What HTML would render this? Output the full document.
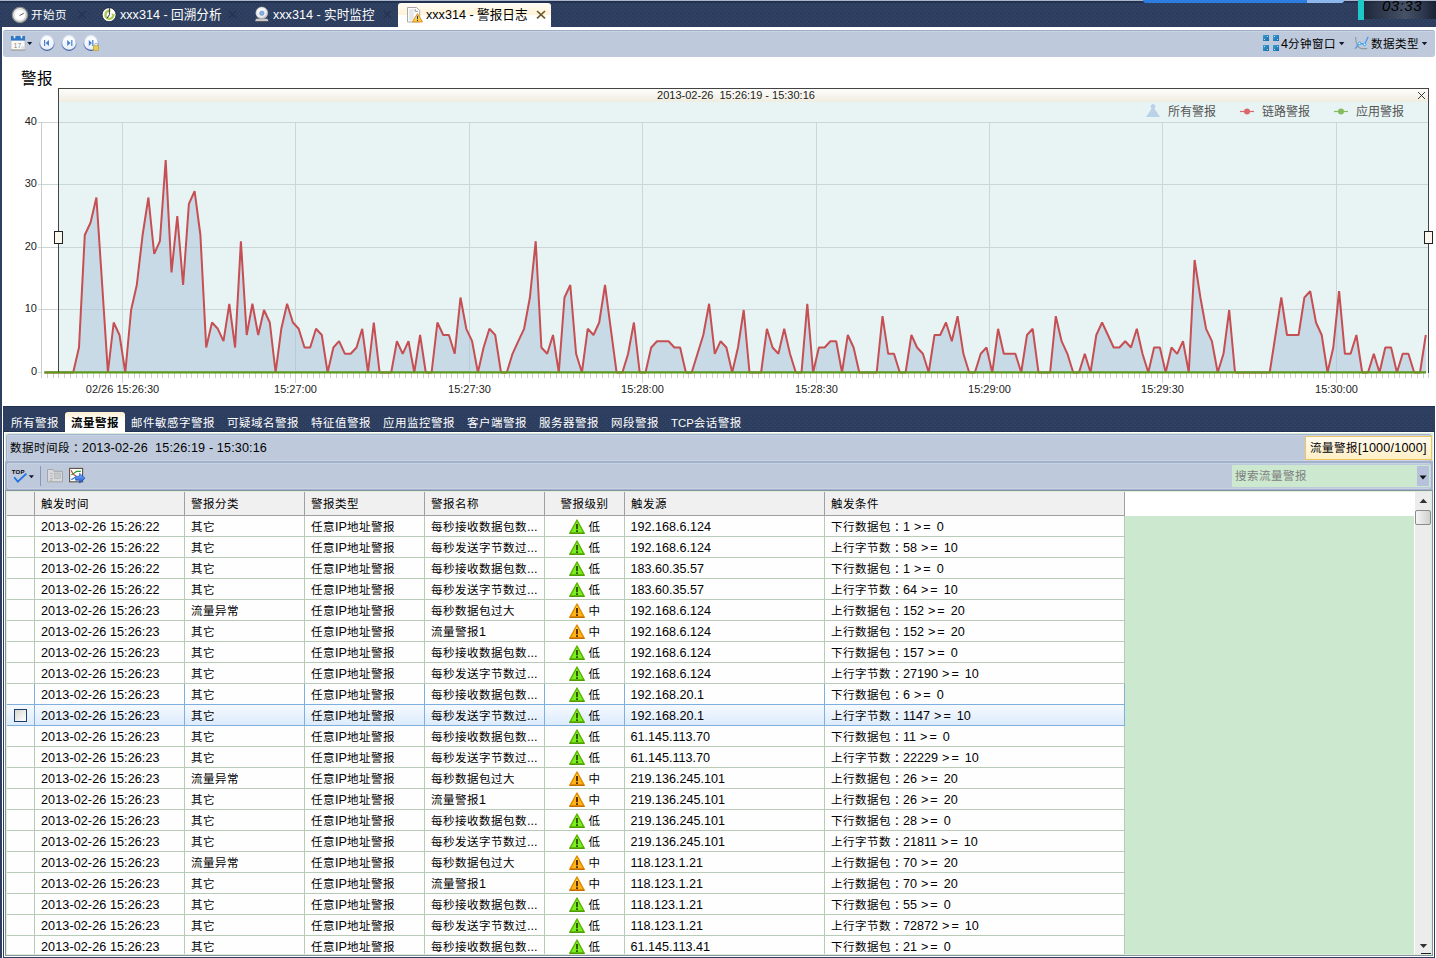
<!DOCTYPE html>
<html lang="zh-CN">
<head>
<meta charset="utf-8">
<title>xxx314 - 警报日志</title>
<style>
*{box-sizing:border-box;margin:0;padding:0}
html,body{width:1436px;height:958px;overflow:hidden;background:#fff}
body{position:relative;font-family:"Liberation Sans","Noto Sans CJK SC",sans-serif;font-size:11.5px;letter-spacing:.5px;color:#000;line-height:16px}
.a{font-size:12.6px;letter-spacing:0}
svg{letter-spacing:0}
.d{letter-spacing:.14px}
.fc{position:relative;left:3px}
.abs{position:absolute}
#top{position:absolute;left:0;top:0;width:1436px;height:27px;background:#2d3e5f}
#lb{position:absolute;left:0;top:27px;width:2px;height:931px;background:#2d3e5f}
.tab{position:absolute;top:7px;height:16px;color:#fff;white-space:nowrap;line-height:16px}
.tab svg{position:absolute;left:0;top:0}
.tab span.tx{position:absolute;left:19px;top:0}
.tx2{position:absolute;top:7px;color:#253552;font-size:12px}
#seltab{position:absolute;left:398px;top:3px;width:153px;height:25px;background:linear-gradient(#fffdf6 0,#fff2d6 12px,#fff 12px);border-radius:3px 3px 0 0}
#tb1{position:absolute;left:3px;top:30px;width:1432px;height:27px;background:#bec9db;border-top:1px solid #9dadc8;border-radius:3px;box-shadow:inset 0 1px 0 0 #c9d3e3}
#title{position:absolute;left:21px;top:68px;font-size:15.5px;line-height:22px}
/* lower panel */
#lp{position:absolute;left:3px;top:406px;width:1432px;height:552px;background:#fff;border-left:1px solid #2d3e5f;border-right:1px solid #2d3e5f;border-bottom:1px solid #2d3e5f}
#lpbar{position:absolute;left:3px;top:406px;width:1432px;height:26px;background:#2d3e5f}
#tabs2{position:absolute;left:5px;top:412px;height:20px;white-space:nowrap;font-size:0}
.t2{display:inline-block;height:20px;padding:0 6px;color:#fff;font-size:11.5px;line-height:22px;vertical-align:top}
.t2 .a{font-size:11.4px}
.t2.on{background:linear-gradient(#fdf0d2 0,#fff 9px);color:#000;font-weight:bold;border-radius:3px 3px 0 0}
#gl{position:absolute;left:5px;top:433px;width:1428px;height:1px;background:#d9efd9}
#info{position:absolute;left:6px;top:434px;width:1426px;height:28px;background:#bec9db;border:1px solid #a3b2cc;border-radius:3px;box-shadow:inset 0 0 0 1px #c8d2e3}
#info .txt{position:absolute;left:3px;top:5px;white-space:pre}
#badge{position:absolute;left:1305px;top:436px;width:127px;height:24px;background:linear-gradient(#fffaf0,#ffefc6);border:1px solid #efc55f;line-height:23px;padding-left:4px;white-space:nowrap}
#badge .a{letter-spacing:.2px}
#tb2{position:absolute;left:6px;top:462px;width:1426px;height:28px;background:#bec9db;border:1px solid #a3b2cc;border-radius:3px;box-shadow:inset 0 0 0 1px #c8d2e3}
#search{position:absolute;left:1232px;top:465px;width:198px;height:22px;background:#cce8cf;color:#7f7f7f;line-height:22px;padding-left:3px}
#sbtn{position:absolute;left:1417px;top:466px;width:12px;height:20px;background:#b6c1db}
#barbg{position:absolute;left:5px;top:434px;width:1428px;height:56px;background:linear-gradient(#d9efd9 0,#d9efd9 27px,#a3b2cc 27px)}
#frame{position:absolute;left:5px;top:490px;width:1428px;height:466px;border:1px solid #8a91a0;background:#d9efd9}
#tbl{position:absolute;left:7px;top:492px;width:1424px;height:462px;background:#fff;overflow:hidden}
#green{position:absolute;left:1118px;top:24px;width:289px;height:440px;background:#cce8cf}
#hdr{position:absolute;left:0;top:0;width:1118px;height:24px;background:#f0f0f0;border-bottom:1px solid #a0a0a0}
#hdr div{position:absolute;top:0;height:23px;border-right:1px solid #a0a0a0;line-height:24px;padding-left:6px;white-space:nowrap}
.r{position:absolute;left:0;width:1118px;height:21px;border-bottom:1px solid #b7cbb7;background:#fefefe}
.c{position:absolute;top:0;height:20px;border-right:1px solid #b7cbb7;line-height:22px;padding-left:6px;white-space:nowrap;overflow:hidden}
.c0{left:0;width:28px}.c1{left:28px;width:150px}.c2{left:178px;width:120px}.c3{left:298px;width:120px}.c4{left:418px;width:120px}.c5{left:538px;width:80px;padding-left:0;text-align:center}.c6{left:618px;width:200px}.c7{left:818px;width:300px}
.c5 .wi{vertical-align:top;margin:3px 4px 0 0}
.c1 .d{letter-spacing:.09px}.c6{padding-left:5.5px}.c7 .a{word-spacing:.5px}.ge{letter-spacing:2px}
.r.hot,.r.sel{border-bottom-color:#7fafdc}
.r.hot .c,.r.sel .c{border-right-color:#7fafdc}
.r.sel{background:linear-gradient(#f6faff,#dcebfc)}
.cb{position:absolute;left:7px;top:4px;width:13px;height:13px;border:1px solid #1c3f6e;background:linear-gradient(135deg,#d8d8d0,#fff)}
#sb{position:absolute;left:1408px;top:0;width:16px;height:463px;background:#ececec}
#sbt{position:absolute;left:0;top:18px;width:16px;height:15px;border:1px solid #8a8a8a;border-radius:2px;background:linear-gradient(90deg,#f4f4f4,#d0d0d0)}
</style>
</head>
<body>
<svg width="0" height="0" style="position:absolute">
<defs>
<pattern id="dots" width="4" height="4" patternUnits="userSpaceOnUse"><rect width="4" height="4" fill="#2c3d5e"/><rect x="3" y="1" width="1" height="1" fill="#354a6e"/><rect x="1" y="3" width="1" height="1" fill="#354a6e"/></pattern>
<pattern id="dots2" width="4" height="4" patternUnits="userSpaceOnUse"><rect width="4" height="4" fill="#2c3d5e"/><rect x="2" y="0" width="1" height="1" fill="#354a6e"/><rect x="0" y="2" width="1" height="1" fill="#354a6e"/></pattern>

<symbol id="wg" viewBox="0 0 16 16"><path d="M8,1 15.2,14.3H.8Z" fill="#7aee20" stroke="#5cb400" stroke-width="1.4" stroke-linejoin="round"/><path d="M.6,14.3h14.8" stroke="#4f9a00" stroke-width="1.3"/><path d="M7,5h2v5.2h-2zM7,11.3h2v1.6h-2z" fill="#2f5a00"/></symbol>
<symbol id="wo" viewBox="0 0 16 16"><path d="M8,1 15.2,14.3H.8Z" fill="#ffb51a" stroke="#e08a00" stroke-width="1.4" stroke-linejoin="round"/><path d="M6,6.5 8,3l2,3.5z" fill="#ffdc28"/><path d="M.6,14.3h14.8" stroke="#c26a00" stroke-width="1.3"/><path d="M7,5h2v5.2h-2zM7,11.3h2v1.6h-2z" fill="#5a2e00"/></symbol>
<radialGradient id="gsil" cx="0.4" cy="0.35" r="0.7"><stop offset="0" stop-color="#fff"/><stop offset="0.7" stop-color="#e9e9e9"/><stop offset="1" stop-color="#b9b9b9"/></radialGradient>
<linearGradient id="gbtn" x1="0" y1="0" x2="0" y2="1"><stop offset="0" stop-color="#fff"/><stop offset="1" stop-color="#e6edf9"/></linearGradient>
<linearGradient id="gbs" gradientUnits="userSpaceOnUse" x1="0" y1="35" x2="0" y2="51"><stop offset="0" stop-color="#e9eef8"/><stop offset=".45" stop-color="#a9bbdc"/><stop offset="1" stop-color="#34559c"/></linearGradient>
<linearGradient id="gsq" x1="0" y1="0" x2="1" y2="1"><stop offset="0" stop-color="#38a0d8"/><stop offset="1" stop-color="#1a6aa6"/></linearGradient>
<linearGradient id="gwarn" x1="0" y1="0" x2="0" y2="1"><stop offset="0" stop-color="#fff06a"/><stop offset="1" stop-color="#ffc832"/></linearGradient>
<linearGradient id="garr" x1="0" y1="0" x2="0" y2="1"><stop offset="0" stop-color="#7ab4ff"/><stop offset="1" stop-color="#1c55d0"/></linearGradient>
</defs>
</svg>

<div id="top"><svg width="1436" height="27" style="position:absolute;left:0;top:0"><rect width="1436" height="27" fill="url(#dots)"/><rect width="1436" height="3" fill="#22314f"/><rect width="1436" height="1" fill="#a9b4ca"/></svg></div>
<div id="lb"></div>
<div id="seltab"></div>
<div class="tab" style="left:12px"><span class="tx">开始页</span></div>
<div class="tab" style="left:101px"><span class="tx"><span class="a">xxx314 -</span><span class="a"> 回溯分析</span></span></div>
<div class="tab" style="left:254px"><span class="tx"><span class="a">xxx314 -</span><span class="a"> 实时监控</span></span></div>
<div class="tab" style="left:407px;color:#000"><span class="tx"><span class="a">xxx314 -</span><span class="a"> 警报日志</span></span></div>

<div class="abs" style="left:1143px;top:0;width:201px;height:3px;background:#2b7de0;border-radius:0 0 6px 6px;overflow:hidden"><div class="abs" style="left:164px;top:0;width:37px;height:3px;background:#8db7ec"></div></div>
<div class="abs" style="left:1358px;top:0;width:6px;height:20px;background:#1ec8c6"></div>
<div class="abs" style="left:1364px;top:1px;width:72px;height:18px;background:linear-gradient(90deg,rgba(22,27,38,.62),rgba(95,100,110,.5) 58%,rgba(40,46,60,.6) 85%,rgba(18,24,38,.75))"></div>
<div class="abs" style="left:1382px;top:-3px;font-size:15px;font-style:italic;color:#000;line-height:18px">03:33</div>

<div id="tb1"></div>
<div class="abs" style="left:1281px;top:36px;white-space:nowrap"><span class="a">4</span>分钟窗口</div>
<div class="abs" style="left:1371px;top:36px;white-space:nowrap">数据类型</div>

<div id="title">警报</div>
<svg id="chart" width="1436" height="406" viewBox="0 0 1436 406" style="position:absolute;left:0;top:0">
<defs><linearGradient id="hb" x1="0" y1="0" x2="0" y2="1"><stop offset="0" stop-color="#fdfdfb"/><stop offset="1" stop-color="#efece0"/></linearGradient></defs>
<rect x="58" y="88" width="1371" height="285" fill="#e8f4f4"/>
<rect x="59" y="89" width="1369" height="13" fill="url(#hb)"/>
<rect x="38" y="122" width="1390" height="1" fill="#cbd6d6"/>
<rect x="38" y="184" width="1390" height="1" fill="#cbd6d6"/>
<rect x="38" y="247" width="1390" height="1" fill="#cbd6d6"/>
<rect x="38" y="309" width="1390" height="1" fill="#cbd6d6"/>
<rect x="38" y="372" width="4" height="1" fill="#cbd6d6"/>
<rect x="41" y="122" width="1" height="256" fill="#cccccc"/>
<rect x="122" y="122" width="1" height="261" fill="#cbd6d6"/>
<rect x="295" y="122" width="1" height="261" fill="#cbd6d6"/>
<rect x="469" y="122" width="1" height="261" fill="#cbd6d6"/>
<rect x="642" y="122" width="1" height="261" fill="#cbd6d6"/>
<rect x="816" y="122" width="1" height="261" fill="#cbd6d6"/>
<rect x="989" y="122" width="1" height="261" fill="#cbd6d6"/>
<rect x="1162" y="122" width="1" height="261" fill="#cbd6d6"/>
<rect x="1336" y="122" width="1" height="261" fill="#cbd6d6"/>
<path d="M41.5,373v5M47.5,373v5M53.5,373v5M58.5,373v5M64.5,373v5M70.5,373v5M76.5,373v5M82.5,373v5M87.5,373v5M93.5,373v5M99.5,373v5M105.5,373v5M110.5,373v5M116.5,373v5M122.5,373v5M128.5,373v5M134.5,373v5M139.5,373v5M145.5,373v5M151.5,373v5M157.5,373v5M162.5,373v5M168.5,373v5M174.5,373v5M180.5,373v5M186.5,373v5M191.5,373v5M197.5,373v5M203.5,373v5M209.5,373v5M215.5,373v5M220.5,373v5M226.5,373v5M232.5,373v5M238.5,373v5M243.5,373v5M249.5,373v5M255.5,373v5M261.5,373v5M267.5,373v5M272.5,373v5M278.5,373v5M284.5,373v5M290.5,373v5M295.5,373v5M301.5,373v5M307.5,373v5M313.5,373v5M319.5,373v5M324.5,373v5M330.5,373v5M336.5,373v5M342.5,373v5M347.5,373v5M353.5,373v5M359.5,373v5M365.5,373v5M371.5,373v5M376.5,373v5M382.5,373v5M388.5,373v5M394.5,373v5M399.5,373v5M405.5,373v5M411.5,373v5M417.5,373v5M423.5,373v5M428.5,373v5M434.5,373v5M440.5,373v5M446.5,373v5M451.5,373v5M457.5,373v5M463.5,373v5M469.5,373v5M475.5,373v5M480.5,373v5M486.5,373v5M492.5,373v5M498.5,373v5M504.5,373v5M509.5,373v5M515.5,373v5M521.5,373v5M527.5,373v5M532.5,373v5M538.5,373v5M544.5,373v5M550.5,373v5M556.5,373v5M561.5,373v5M567.5,373v5M573.5,373v5M579.5,373v5M584.5,373v5M590.5,373v5M596.5,373v5M602.5,373v5M608.5,373v5M613.5,373v5M619.5,373v5M625.5,373v5M631.5,373v5M636.5,373v5M642.5,373v5M648.5,373v5M654.5,373v5M660.5,373v5M665.5,373v5M671.5,373v5M677.5,373v5M683.5,373v5M688.5,373v5M694.5,373v5M700.5,373v5M706.5,373v5M712.5,373v5M717.5,373v5M723.5,373v5M729.5,373v5M735.5,373v5M740.5,373v5M746.5,373v5M752.5,373v5M758.5,373v5M764.5,373v5M769.5,373v5M775.5,373v5M781.5,373v5M787.5,373v5M793.5,373v5M798.5,373v5M804.5,373v5M810.5,373v5M816.5,373v5M821.5,373v5M827.5,373v5M833.5,373v5M839.5,373v5M845.5,373v5M850.5,373v5M856.5,373v5M862.5,373v5M868.5,373v5M873.5,373v5M879.5,373v5M885.5,373v5M891.5,373v5M897.5,373v5M902.5,373v5M908.5,373v5M914.5,373v5M920.5,373v5M925.5,373v5M931.5,373v5M937.5,373v5M943.5,373v5M949.5,373v5M954.5,373v5M960.5,373v5M966.5,373v5M972.5,373v5M977.5,373v5M983.5,373v5M989.5,373v5M995.5,373v5M1001.5,373v5M1006.5,373v5M1012.5,373v5M1018.5,373v5M1024.5,373v5M1029.5,373v5M1035.5,373v5M1041.5,373v5M1047.5,373v5M1053.5,373v5M1058.5,373v5M1064.5,373v5M1070.5,373v5M1076.5,373v5M1082.5,373v5M1087.5,373v5M1093.5,373v5M1099.5,373v5M1105.5,373v5M1110.5,373v5M1116.5,373v5M1122.5,373v5M1128.5,373v5M1134.5,373v5M1139.5,373v5M1145.5,373v5M1151.5,373v5M1157.5,373v5M1162.5,373v5M1168.5,373v5M1174.5,373v5M1180.5,373v5M1186.5,373v5M1191.5,373v5M1197.5,373v5M1203.5,373v5M1209.5,373v5M1214.5,373v5M1220.5,373v5M1226.5,373v5M1232.5,373v5M1238.5,373v5M1243.5,373v5M1249.5,373v5M1255.5,373v5M1261.5,373v5M1266.5,373v5M1272.5,373v5M1278.5,373v5M1284.5,373v5M1290.5,373v5M1295.5,373v5M1301.5,373v5M1307.5,373v5M1313.5,373v5M1318.5,373v5M1324.5,373v5M1330.5,373v5M1336.5,373v5M1342.5,373v5M1347.5,373v5M1353.5,373v5M1359.5,373v5M1365.5,373v5M1371.5,373v5M1376.5,373v5M1382.5,373v5M1388.5,373v5M1394.5,373v5M1399.5,373v5M1405.5,373v5M1411.5,373v5M1417.5,373v5M1423.5,373v5M1428.5,373v5" stroke="#cfcfcf" stroke-width="1" fill="none"/>
<path d="M44.3,372.5 L44.3,372.5 L50.1,372.5 L55.9,372.5 L61.7,372.5 L67.5,372.5 L73.2,372.5 L79.0,347.5 L84.8,235.0 L90.6,222.5 L96.4,197.5 L102.2,285.0 L107.9,372.5 L113.7,322.5 L119.5,335.0 L125.3,372.5 L131.1,310.0 L136.8,285.0 L142.6,235.0 L148.4,197.5 L154.2,253.8 L159.9,241.2 L165.7,160.0 L171.5,272.5 L177.3,216.2 L183.1,285.0 L188.9,203.8 L194.6,191.2 L200.4,235.0 L206.2,347.5 L212.0,322.5 L217.8,328.8 L223.5,341.2 L229.3,303.8 L235.1,347.5 L240.9,241.2 L246.7,335.0 L252.4,303.8 L258.2,335.0 L264.0,310.0 L269.8,322.5 L275.6,372.5 L281.3,328.8 L287.1,303.8 L292.9,322.5 L298.7,328.8 L304.5,347.5 L310.2,347.5 L316.0,328.8 L321.8,335.0 L327.6,372.5 L333.4,347.5 L339.1,341.2 L344.9,353.8 L350.7,353.8 L356.5,347.5 L362.2,328.8 L368.0,372.5 L373.8,322.5 L379.6,372.5 L385.4,372.5 L391.2,372.5 L396.9,341.2 L402.7,353.8 L408.5,341.2 L414.3,372.5 L420.1,335.0 L425.8,372.5 L431.6,372.5 L437.4,322.5 L443.2,335.0 L448.9,335.0 L454.7,353.8 L460.5,297.5 L466.3,328.8 L472.1,341.2 L477.9,372.5 L483.6,347.5 L489.4,328.8 L495.2,335.0 L501.0,372.5 L506.8,372.5 L512.5,353.8 L518.3,341.2 L524.1,328.8 L529.9,297.5 L535.7,241.2 L541.4,347.5 L547.2,353.8 L553.0,335.0 L558.8,372.5 L564.5,297.5 L570.3,285.0 L576.1,353.8 L581.9,372.5 L587.7,328.8 L593.5,335.0 L599.2,322.5 L605.0,285.0 L610.8,328.8 L616.6,372.5 L622.4,372.5 L628.1,353.8 L633.9,322.5 L639.7,372.5 L645.5,372.5 L651.2,347.5 L657.0,341.2 L662.8,341.2 L668.6,341.2 L674.4,347.5 L680.1,347.5 L685.9,372.5 L691.7,372.5 L697.5,353.8 L703.3,335.0 L709.1,303.8 L714.8,353.8 L720.6,341.2 L726.4,347.5 L732.2,372.5 L738.0,347.5 L743.7,310.0 L749.5,372.5 L755.3,372.5 L761.1,372.5 L766.9,328.8 L772.6,347.5 L778.4,353.8 L784.2,328.8 L790.0,353.8 L795.8,372.5 L801.5,372.5 L807.3,303.8 L813.1,372.5 L818.9,347.5 L824.6,347.5 L830.4,341.2 L836.2,341.2 L842.0,372.5 L847.8,335.0 L853.6,347.5 L859.3,372.5 L865.1,372.5 L870.9,372.5 L876.7,372.5 L882.5,316.2 L888.2,353.8 L894.0,353.8 L899.8,372.5 L905.6,372.5 L911.4,335.0 L917.1,347.5 L922.9,353.8 L928.7,372.5 L934.5,335.0 L940.2,335.0 L946.0,322.5 L951.8,341.2 L957.6,316.2 L963.4,353.8 L969.2,372.5 L974.9,372.5 L980.7,353.8 L986.5,347.5 L992.3,372.5 L998.1,328.8 L1003.8,353.8 L1009.6,353.8 L1015.4,353.8 L1021.2,372.5 L1027.0,335.0 L1032.7,328.8 L1038.5,372.5 L1044.3,372.5 L1050.1,372.5 L1055.8,316.2 L1061.6,341.2 L1067.4,353.8 L1073.2,372.5 L1079.0,372.5 L1084.8,353.8 L1090.5,372.5 L1096.3,335.0 L1102.1,322.5 L1107.9,335.0 L1113.7,347.5 L1119.4,347.5 L1125.2,341.2 L1131.0,347.5 L1136.8,328.8 L1142.5,353.8 L1148.3,372.5 L1154.1,347.5 L1159.9,347.5 L1165.7,372.5 L1171.5,347.5 L1177.2,353.8 L1183.0,341.2 L1188.8,372.5 L1194.6,260.0 L1200.4,297.5 L1206.1,328.8 L1211.9,341.2 L1217.7,372.5 L1223.5,353.8 L1229.2,310.0 L1235.0,372.5 L1240.8,372.5 L1246.6,372.5 L1252.4,372.5 L1258.2,372.5 L1263.9,372.5 L1269.7,372.5 L1275.5,335.0 L1281.3,297.5 L1287.0,335.0 L1292.8,335.0 L1298.6,335.0 L1304.4,297.5 L1310.2,291.2 L1316.0,322.5 L1321.7,335.0 L1327.5,372.5 L1333.3,347.5 L1339.1,291.2 L1344.9,353.8 L1350.6,353.8 L1356.4,335.0 L1362.2,372.5 L1368.0,372.5 L1373.8,353.8 L1379.5,372.5 L1385.3,347.5 L1391.1,347.5 L1396.9,372.5 L1402.7,353.8 L1408.4,353.8 L1414.2,372.5 L1420.0,372.5 L1425.8,335.0 L1425.8,372.5 Z" fill="#a9c0da" fill-opacity="0.5"/>
<polyline points="44.3,372.5 50.1,372.5 55.9,372.5 61.7,372.5 67.5,372.5 73.2,372.5 79.0,347.5 84.8,235.0 90.6,222.5 96.4,197.5 102.2,285.0 107.9,372.5 113.7,322.5 119.5,335.0 125.3,372.5 131.1,310.0 136.8,285.0 142.6,235.0 148.4,197.5 154.2,253.8 159.9,241.2 165.7,160.0 171.5,272.5 177.3,216.2 183.1,285.0 188.9,203.8 194.6,191.2 200.4,235.0 206.2,347.5 212.0,322.5 217.8,328.8 223.5,341.2 229.3,303.8 235.1,347.5 240.9,241.2 246.7,335.0 252.4,303.8 258.2,335.0 264.0,310.0 269.8,322.5 275.6,372.5 281.3,328.8 287.1,303.8 292.9,322.5 298.7,328.8 304.5,347.5 310.2,347.5 316.0,328.8 321.8,335.0 327.6,372.5 333.4,347.5 339.1,341.2 344.9,353.8 350.7,353.8 356.5,347.5 362.2,328.8 368.0,372.5 373.8,322.5 379.6,372.5 385.4,372.5 391.2,372.5 396.9,341.2 402.7,353.8 408.5,341.2 414.3,372.5 420.1,335.0 425.8,372.5 431.6,372.5 437.4,322.5 443.2,335.0 448.9,335.0 454.7,353.8 460.5,297.5 466.3,328.8 472.1,341.2 477.9,372.5 483.6,347.5 489.4,328.8 495.2,335.0 501.0,372.5 506.8,372.5 512.5,353.8 518.3,341.2 524.1,328.8 529.9,297.5 535.7,241.2 541.4,347.5 547.2,353.8 553.0,335.0 558.8,372.5 564.5,297.5 570.3,285.0 576.1,353.8 581.9,372.5 587.7,328.8 593.5,335.0 599.2,322.5 605.0,285.0 610.8,328.8 616.6,372.5 622.4,372.5 628.1,353.8 633.9,322.5 639.7,372.5 645.5,372.5 651.2,347.5 657.0,341.2 662.8,341.2 668.6,341.2 674.4,347.5 680.1,347.5 685.9,372.5 691.7,372.5 697.5,353.8 703.3,335.0 709.1,303.8 714.8,353.8 720.6,341.2 726.4,347.5 732.2,372.5 738.0,347.5 743.7,310.0 749.5,372.5 755.3,372.5 761.1,372.5 766.9,328.8 772.6,347.5 778.4,353.8 784.2,328.8 790.0,353.8 795.8,372.5 801.5,372.5 807.3,303.8 813.1,372.5 818.9,347.5 824.6,347.5 830.4,341.2 836.2,341.2 842.0,372.5 847.8,335.0 853.6,347.5 859.3,372.5 865.1,372.5 870.9,372.5 876.7,372.5 882.5,316.2 888.2,353.8 894.0,353.8 899.8,372.5 905.6,372.5 911.4,335.0 917.1,347.5 922.9,353.8 928.7,372.5 934.5,335.0 940.2,335.0 946.0,322.5 951.8,341.2 957.6,316.2 963.4,353.8 969.2,372.5 974.9,372.5 980.7,353.8 986.5,347.5 992.3,372.5 998.1,328.8 1003.8,353.8 1009.6,353.8 1015.4,353.8 1021.2,372.5 1027.0,335.0 1032.7,328.8 1038.5,372.5 1044.3,372.5 1050.1,372.5 1055.8,316.2 1061.6,341.2 1067.4,353.8 1073.2,372.5 1079.0,372.5 1084.8,353.8 1090.5,372.5 1096.3,335.0 1102.1,322.5 1107.9,335.0 1113.7,347.5 1119.4,347.5 1125.2,341.2 1131.0,347.5 1136.8,328.8 1142.5,353.8 1148.3,372.5 1154.1,347.5 1159.9,347.5 1165.7,372.5 1171.5,347.5 1177.2,353.8 1183.0,341.2 1188.8,372.5 1194.6,260.0 1200.4,297.5 1206.1,328.8 1211.9,341.2 1217.7,372.5 1223.5,353.8 1229.2,310.0 1235.0,372.5 1240.8,372.5 1246.6,372.5 1252.4,372.5 1258.2,372.5 1263.9,372.5 1269.7,372.5 1275.5,335.0 1281.3,297.5 1287.0,335.0 1292.8,335.0 1298.6,335.0 1304.4,297.5 1310.2,291.2 1316.0,322.5 1321.7,335.0 1327.5,372.5 1333.3,347.5 1339.1,291.2 1344.9,353.8 1350.6,353.8 1356.4,335.0 1362.2,372.5 1368.0,372.5 1373.8,353.8 1379.5,372.5 1385.3,347.5 1391.1,347.5 1396.9,372.5 1402.7,353.8 1408.4,353.8 1414.2,372.5 1420.0,372.5 1425.8,335.0" fill="none" stroke="#c54f52" stroke-width="2" stroke-linejoin="bevel"/>
<path d="M44.5,372.4H1426" stroke="#5b9a1f" stroke-width="2.2" fill="none"/>
<rect x="58" y="88" width="1371" height="1" fill="#444"/>
<rect x="58" y="88" width="1" height="284" fill="#444"/>
<rect x="1428" y="88" width="1" height="285" fill="#444"/>
<rect x="54.5" y="231.5" width="8" height="12" fill="#faf8ee" stroke="#222" stroke-width="1"/>
<rect x="1424.5" y="231.5" width="8" height="12" fill="#faf8ee" stroke="#222" stroke-width="1"/>
<path d="M1418,92l7,7M1425,92l-7,7" stroke="#222" stroke-width="0.9" fill="none"/>
<g font-family="'Liberation Sans',sans-serif" font-size="11" fill="#222">
<text x="37" y="125" text-anchor="end">40</text>
<text x="37" y="187" text-anchor="end">30</text>
<text x="37" y="250" text-anchor="end">20</text>
<text x="37" y="312" text-anchor="end">10</text>
<text x="37" y="375" text-anchor="end">0</text>
<text x="122.5" y="393" text-anchor="middle">02/26 15:26:30</text>
<text x="295.5" y="393" text-anchor="middle">15:27:00</text>
<text x="469.5" y="393" text-anchor="middle">15:27:30</text>
<text x="642.5" y="393" text-anchor="middle">15:28:00</text>
<text x="816.5" y="393" text-anchor="middle">15:28:30</text>
<text x="989.5" y="393" text-anchor="middle">15:29:00</text>
<text x="1162.5" y="393" text-anchor="middle">15:29:30</text>
<text x="1336.5" y="393" text-anchor="middle">15:30:00</text>
<text x="736" y="99" text-anchor="middle" fill="#222" xml:space="preserve">2013-02-26  15:26:19 - 15:30:16</text>
</g>
<g font-family="'Liberation Sans','Noto Sans CJK SC',sans-serif" font-size="12" fill="#555">
<path d="M1146,117L1151.7,108.4a2.3,2.3 0 1 1 2.6,0L1160,117Z" fill="#b7d0e6" fill-opacity="0.95"/>
<text x="1168" y="115.5">所有警报</text>
<path d="M1240,111.5h14" stroke="#d9686c" stroke-width="1.2"/><circle cx="1247" cy="111.5" r="3" fill="#d9686c"/>
<text x="1262" y="115.5">链路警报</text>
<path d="M1334,111.5h14" stroke="#85bb5c" stroke-width="1.2"/><circle cx="1341" cy="111.5" r="3" fill="#85bb5c"/>
<text x="1356" y="115.5">应用警报</text>
</g>
</svg>

<div id="lp"></div>
<div id="lpbar"><svg width="1432" height="26" style="position:absolute;left:0;top:0"><rect width="1432" height="26" fill="url(#dots2)"/><rect y="1" width="1432" height="3" fill="#2c3d5e"/><rect width="1432" height="1" fill="#22314f"/><rect y="25" width="1432" height="1" fill="#22314f"/></svg></div>
<div id="tabs2"><span class="t2">所有警报</span><span class="t2 on">流量警报</span><span class="t2">邮件敏感字警报</span><span class="t2">可疑域名警报</span><span class="t2">特征值警报</span><span class="t2">应用监控警报</span><span class="t2">客户端警报</span><span class="t2">服务器警报</span><span class="t2">网段警报</span><span class="t2"><span class="a">TCP</span>会话警报</span></div>
<div id="gl"></div>
<div id="barbg"></div>
<div id="info"><span class="txt">数据时间段<span class="fc">：</span><span class="a d">2013-02-26  15:26:19 - 15:30:16</span></span></div>
<div id="badge">流量警报<span class="a">[1000/1000]</span></div>
<div id="tb2"></div>
<div id="search">搜索流量警报</div>
<div id="sbtn"><svg width="12" height="20"><path d="M2.5,9.5h7l-3.5,4z" fill="#111"/></svg></div>
<div id="frame"></div>
<div id="tbl">
<div id="hdr"><div style="left:0;width:28px"></div><div style="left:28px;width:150px">触发时间</div><div style="left:178px;width:120px">警报分类</div><div style="left:298px;width:120px">警报类型</div><div style="left:418px;width:120px">警报名称</div><div style="left:538px;width:80px;padding-left:0;text-align:center">警报级别</div><div style="left:618px;width:200px">触发源</div><div style="left:818px;width:300px">触发条件</div></div>
<div id="green"></div>
<div class="r" style="top:24px"><div class="c c0"></div><div class="c c1"><span class="a d">2013-02-26 15:26:22</span></div><div class="c c2">其它</div><div class="c c3">任意<span class="a">IP</span>地址警报</div><div class="c c4">每秒接收数据包数<span class="a">...</span></div><div class="c c5"><svg class="wi" width="16" height="16" viewBox="0 0 16 16"><use href="#wg"/></svg>低</div><div class="c c6"><span class="a">192.168.6.124</span></div><div class="c c7">下行数据包<span class="fc">：</span><span class="a">1 <span class="ge">&gt;=</span> 0</span></div></div>
<div class="r" style="top:45px"><div class="c c0"></div><div class="c c1"><span class="a d">2013-02-26 15:26:22</span></div><div class="c c2">其它</div><div class="c c3">任意<span class="a">IP</span>地址警报</div><div class="c c4">每秒发送字节数过<span class="a">...</span></div><div class="c c5"><svg class="wi" width="16" height="16" viewBox="0 0 16 16"><use href="#wg"/></svg>低</div><div class="c c6"><span class="a">192.168.6.124</span></div><div class="c c7">上行字节数<span class="fc">：</span><span class="a">58 <span class="ge">&gt;=</span> 10</span></div></div>
<div class="r" style="top:66px"><div class="c c0"></div><div class="c c1"><span class="a d">2013-02-26 15:26:22</span></div><div class="c c2">其它</div><div class="c c3">任意<span class="a">IP</span>地址警报</div><div class="c c4">每秒接收数据包数<span class="a">...</span></div><div class="c c5"><svg class="wi" width="16" height="16" viewBox="0 0 16 16"><use href="#wg"/></svg>低</div><div class="c c6"><span class="a">183.60.35.57</span></div><div class="c c7">下行数据包<span class="fc">：</span><span class="a">1 <span class="ge">&gt;=</span> 0</span></div></div>
<div class="r" style="top:87px"><div class="c c0"></div><div class="c c1"><span class="a d">2013-02-26 15:26:22</span></div><div class="c c2">其它</div><div class="c c3">任意<span class="a">IP</span>地址警报</div><div class="c c4">每秒发送字节数过<span class="a">...</span></div><div class="c c5"><svg class="wi" width="16" height="16" viewBox="0 0 16 16"><use href="#wg"/></svg>低</div><div class="c c6"><span class="a">183.60.35.57</span></div><div class="c c7">上行字节数<span class="fc">：</span><span class="a">64 <span class="ge">&gt;=</span> 10</span></div></div>
<div class="r" style="top:108px"><div class="c c0"></div><div class="c c1"><span class="a d">2013-02-26 15:26:23</span></div><div class="c c2">流量异常</div><div class="c c3">任意<span class="a">IP</span>地址警报</div><div class="c c4">每秒数据包过大</div><div class="c c5"><svg class="wi" width="16" height="16" viewBox="0 0 16 16"><use href="#wo"/></svg>中</div><div class="c c6"><span class="a">192.168.6.124</span></div><div class="c c7">上行数据包<span class="fc">：</span><span class="a">152 <span class="ge">&gt;=</span> 20</span></div></div>
<div class="r" style="top:129px"><div class="c c0"></div><div class="c c1"><span class="a d">2013-02-26 15:26:23</span></div><div class="c c2">其它</div><div class="c c3">任意<span class="a">IP</span>地址警报</div><div class="c c4">流量警报<span class="a">1</span></div><div class="c c5"><svg class="wi" width="16" height="16" viewBox="0 0 16 16"><use href="#wo"/></svg>中</div><div class="c c6"><span class="a">192.168.6.124</span></div><div class="c c7">上行数据包<span class="fc">：</span><span class="a">152 <span class="ge">&gt;=</span> 20</span></div></div>
<div class="r" style="top:150px"><div class="c c0"></div><div class="c c1"><span class="a d">2013-02-26 15:26:23</span></div><div class="c c2">其它</div><div class="c c3">任意<span class="a">IP</span>地址警报</div><div class="c c4">每秒接收数据包数<span class="a">...</span></div><div class="c c5"><svg class="wi" width="16" height="16" viewBox="0 0 16 16"><use href="#wg"/></svg>低</div><div class="c c6"><span class="a">192.168.6.124</span></div><div class="c c7">下行数据包<span class="fc">：</span><span class="a">157 <span class="ge">&gt;=</span> 0</span></div></div>
<div class="r" style="top:171px"><div class="c c0"></div><div class="c c1"><span class="a d">2013-02-26 15:26:23</span></div><div class="c c2">其它</div><div class="c c3">任意<span class="a">IP</span>地址警报</div><div class="c c4">每秒发送字节数过<span class="a">...</span></div><div class="c c5"><svg class="wi" width="16" height="16" viewBox="0 0 16 16"><use href="#wg"/></svg>低</div><div class="c c6"><span class="a">192.168.6.124</span></div><div class="c c7">上行字节数<span class="fc">：</span><span class="a">27190 <span class="ge">&gt;=</span> 10</span></div></div>
<div class="r hot" style="top:192px"><div class="c c0"></div><div class="c c1"><span class="a d">2013-02-26 15:26:23</span></div><div class="c c2">其它</div><div class="c c3">任意<span class="a">IP</span>地址警报</div><div class="c c4">每秒接收数据包数<span class="a">...</span></div><div class="c c5"><svg class="wi" width="16" height="16" viewBox="0 0 16 16"><use href="#wg"/></svg>低</div><div class="c c6"><span class="a">192.168.20.1</span></div><div class="c c7">下行数据包<span class="fc">：</span><span class="a">6 <span class="ge">&gt;=</span> 0</span></div></div>
<div class="r sel" style="top:213px"><div class="c c0"><i class="cb"></i></div><div class="c c1"><span class="a d">2013-02-26 15:26:23</span></div><div class="c c2">其它</div><div class="c c3">任意<span class="a">IP</span>地址警报</div><div class="c c4">每秒发送字节数过<span class="a">...</span></div><div class="c c5"><svg class="wi" width="16" height="16" viewBox="0 0 16 16"><use href="#wg"/></svg>低</div><div class="c c6"><span class="a">192.168.20.1</span></div><div class="c c7">上行字节数<span class="fc">：</span><span class="a">1147 <span class="ge">&gt;=</span> 10</span></div></div>
<div class="r" style="top:234px"><div class="c c0"></div><div class="c c1"><span class="a d">2013-02-26 15:26:23</span></div><div class="c c2">其它</div><div class="c c3">任意<span class="a">IP</span>地址警报</div><div class="c c4">每秒接收数据包数<span class="a">...</span></div><div class="c c5"><svg class="wi" width="16" height="16" viewBox="0 0 16 16"><use href="#wg"/></svg>低</div><div class="c c6"><span class="a">61.145.113.70</span></div><div class="c c7">下行数据包<span class="fc">：</span><span class="a">11 <span class="ge">&gt;=</span> 0</span></div></div>
<div class="r" style="top:255px"><div class="c c0"></div><div class="c c1"><span class="a d">2013-02-26 15:26:23</span></div><div class="c c2">其它</div><div class="c c3">任意<span class="a">IP</span>地址警报</div><div class="c c4">每秒发送字节数过<span class="a">...</span></div><div class="c c5"><svg class="wi" width="16" height="16" viewBox="0 0 16 16"><use href="#wg"/></svg>低</div><div class="c c6"><span class="a">61.145.113.70</span></div><div class="c c7">上行字节数<span class="fc">：</span><span class="a">22229 <span class="ge">&gt;=</span> 10</span></div></div>
<div class="r" style="top:276px"><div class="c c0"></div><div class="c c1"><span class="a d">2013-02-26 15:26:23</span></div><div class="c c2">流量异常</div><div class="c c3">任意<span class="a">IP</span>地址警报</div><div class="c c4">每秒数据包过大</div><div class="c c5"><svg class="wi" width="16" height="16" viewBox="0 0 16 16"><use href="#wo"/></svg>中</div><div class="c c6"><span class="a">219.136.245.101</span></div><div class="c c7">上行数据包<span class="fc">：</span><span class="a">26 <span class="ge">&gt;=</span> 20</span></div></div>
<div class="r" style="top:297px"><div class="c c0"></div><div class="c c1"><span class="a d">2013-02-26 15:26:23</span></div><div class="c c2">其它</div><div class="c c3">任意<span class="a">IP</span>地址警报</div><div class="c c4">流量警报<span class="a">1</span></div><div class="c c5"><svg class="wi" width="16" height="16" viewBox="0 0 16 16"><use href="#wo"/></svg>中</div><div class="c c6"><span class="a">219.136.245.101</span></div><div class="c c7">上行数据包<span class="fc">：</span><span class="a">26 <span class="ge">&gt;=</span> 20</span></div></div>
<div class="r" style="top:318px"><div class="c c0"></div><div class="c c1"><span class="a d">2013-02-26 15:26:23</span></div><div class="c c2">其它</div><div class="c c3">任意<span class="a">IP</span>地址警报</div><div class="c c4">每秒接收数据包数<span class="a">...</span></div><div class="c c5"><svg class="wi" width="16" height="16" viewBox="0 0 16 16"><use href="#wg"/></svg>低</div><div class="c c6"><span class="a">219.136.245.101</span></div><div class="c c7">下行数据包<span class="fc">：</span><span class="a">28 <span class="ge">&gt;=</span> 0</span></div></div>
<div class="r" style="top:339px"><div class="c c0"></div><div class="c c1"><span class="a d">2013-02-26 15:26:23</span></div><div class="c c2">其它</div><div class="c c3">任意<span class="a">IP</span>地址警报</div><div class="c c4">每秒发送字节数过<span class="a">...</span></div><div class="c c5"><svg class="wi" width="16" height="16" viewBox="0 0 16 16"><use href="#wg"/></svg>低</div><div class="c c6"><span class="a">219.136.245.101</span></div><div class="c c7">上行字节数<span class="fc">：</span><span class="a">21811 <span class="ge">&gt;=</span> 10</span></div></div>
<div class="r" style="top:360px"><div class="c c0"></div><div class="c c1"><span class="a d">2013-02-26 15:26:23</span></div><div class="c c2">流量异常</div><div class="c c3">任意<span class="a">IP</span>地址警报</div><div class="c c4">每秒数据包过大</div><div class="c c5"><svg class="wi" width="16" height="16" viewBox="0 0 16 16"><use href="#wo"/></svg>中</div><div class="c c6"><span class="a">118.123.1.21</span></div><div class="c c7">上行数据包<span class="fc">：</span><span class="a">70 <span class="ge">&gt;=</span> 20</span></div></div>
<div class="r" style="top:381px"><div class="c c0"></div><div class="c c1"><span class="a d">2013-02-26 15:26:23</span></div><div class="c c2">其它</div><div class="c c3">任意<span class="a">IP</span>地址警报</div><div class="c c4">流量警报<span class="a">1</span></div><div class="c c5"><svg class="wi" width="16" height="16" viewBox="0 0 16 16"><use href="#wo"/></svg>中</div><div class="c c6"><span class="a">118.123.1.21</span></div><div class="c c7">上行数据包<span class="fc">：</span><span class="a">70 <span class="ge">&gt;=</span> 20</span></div></div>
<div class="r" style="top:402px"><div class="c c0"></div><div class="c c1"><span class="a d">2013-02-26 15:26:23</span></div><div class="c c2">其它</div><div class="c c3">任意<span class="a">IP</span>地址警报</div><div class="c c4">每秒接收数据包数<span class="a">...</span></div><div class="c c5"><svg class="wi" width="16" height="16" viewBox="0 0 16 16"><use href="#wg"/></svg>低</div><div class="c c6"><span class="a">118.123.1.21</span></div><div class="c c7">下行数据包<span class="fc">：</span><span class="a">55 <span class="ge">&gt;=</span> 0</span></div></div>
<div class="r" style="top:423px"><div class="c c0"></div><div class="c c1"><span class="a d">2013-02-26 15:26:23</span></div><div class="c c2">其它</div><div class="c c3">任意<span class="a">IP</span>地址警报</div><div class="c c4">每秒发送字节数过<span class="a">...</span></div><div class="c c5"><svg class="wi" width="16" height="16" viewBox="0 0 16 16"><use href="#wg"/></svg>低</div><div class="c c6"><span class="a">118.123.1.21</span></div><div class="c c7">上行字节数<span class="fc">：</span><span class="a">72872 <span class="ge">&gt;=</span> 10</span></div></div>
<div class="r" style="top:444px"><div class="c c0"></div><div class="c c1"><span class="a d">2013-02-26 15:26:23</span></div><div class="c c2">其它</div><div class="c c3">任意<span class="a">IP</span>地址警报</div><div class="c c4">每秒接收数据包数<span class="a">...</span></div><div class="c c5"><svg class="wi" width="16" height="16" viewBox="0 0 16 16"><use href="#wg"/></svg>低</div><div class="c c6"><span class="a">61.145.113.41</span></div><div class="c c7">下行数据包<span class="fc">：</span><span class="a">21 <span class="ge">&gt;=</span> 0</span></div></div>
<div id="sb"><svg width="16" height="463" style="position:absolute;left:0;top:0"><path d="M4.6,11h7.6l-3.8,-4.2z" fill="#333"/><path d="M4.8,452h7.4l-3.7,4z" fill="#333"/><rect x="6" y="461" width="11" height="1" fill="#222"/></svg><div id="sbt"></div></div>
</div>

<svg id="icons" width="1436" height="958" style="position:absolute;left:0;top:0;pointer-events:none" font-family="'Liberation Sans',sans-serif">
<!-- tab icons -->
<g><circle cx="20" cy="15" r="7.6" fill="url(#gsil)" stroke="#8d8d8d" stroke-width="1.3"/><circle cx="20" cy="15" r="5.6" fill="#fff" stroke="#d0d0d0" stroke-width=".6"/><path d="M19.6,15.6l4.2,-2.4" stroke="#555" stroke-width="1" fill="none"/></g>
<g><circle cx="109.1" cy="14.7" r="7" fill="#fff" stroke="#131b2c" stroke-width=".8"/><path d="M110.4,10.9a4,4 0 1 0 2.9,5" stroke="#a9cc58" stroke-width="2.4" fill="none"/><path d="M111.4,13.3l3.9,1.3-2.6,3z" fill="#a9cc58"/><path d="M109.4,8.2v6.6l-2.4,3.4" stroke="#333" stroke-width="1" fill="none"/></g>
<g><path d="M255,21.6h13.4l-.8,-2.8h-11.6z" fill="#c9c9c9"/><path d="M255,21.5h13.6" stroke="#555" stroke-width=".9"/><circle cx="261.8" cy="13" r="5.9" fill="url(#gsil)" stroke="#cfcfcf" stroke-width=".6"/><circle cx="261.8" cy="13.2" r="2.2" fill="#86aee8" stroke="#6b8dc4" stroke-width=".6"/><path d="M258.4,17.4a5,5 0 0 0 6.8,0" stroke="#9a9a9a" stroke-width=".8" fill="none"/></g>
<g><path d="M407.5,7.5h9.2l3,3v11.5h-12.2z" fill="#fbfbfb" stroke="#a9a9a9" stroke-width="1"/><path d="M409.2,9.3h4.4v11h-4.4z" fill="#e4e6e8"/><path d="M415.2,9v2.4h2.6" stroke="#9a9a9a" stroke-width="1" fill="none"/><path d="M417.5,13.6l5,8.3h-10z" fill="url(#gwarn)" stroke="#e0922a" stroke-width="1" stroke-linejoin="round"/><path d="M417.5,15.8v3.4M417.5,20v1" stroke="#2b3a78" stroke-width="1.1"/></g>
<path d="M537,11l8,7.4M545,11l-8,7.4" stroke="#6e5c30" stroke-width="1.7" fill="none"/>
<path d="M78.5,11l7,7M85.5,11l-7,7M229,11l7,7M236,11l-7,7M384,11l7,7M391,11l-7,7" stroke="#263552" stroke-width="1.5" fill="none"/>
<!-- toolbar 1 icons -->
<g><rect x="11" y="36.5" width="14" height="14" fill="#fafafa" stroke="#b9b9b9" stroke-width=".8"/><rect x="11" y="36" width="14" height="4.6" fill="#2f78c8"/><rect x="13.6" y="35" width="1.8" height="3.4" rx=".8" fill="#e6e6e6"/><rect x="20.6" y="35" width="1.8" height="3.4" rx=".8" fill="#e6e6e6"/><text x="13.6" y="47.6" font-size="7" fill="#8a8a8a">17</text><circle cx="22.6" cy="47.6" r="1" fill="none" stroke="#bbb" stroke-width=".6"/><path d="M11,50h14" stroke="#a4a4a4" stroke-width="1.4"/><path d="M27.2,42h5l-2.5,3z" fill="#0f1a30"/></g>
<g fill="url(#gbtn)" stroke="url(#gbs)" stroke-width="1.2"><circle cx="47" cy="43" r="7.3"/><circle cx="69" cy="43" r="7.3"/><circle cx="91" cy="43" r="7.3"/></g>
<g fill="#4a80d0"><path d="M44,40h1.2v6h-1.2zM49,40v6l-3.4,-3z"/><path d="M71.2,40h1.2v6h-1.2zM67.2,40v6l3.4,-3z"/><path d="M92.2,40h1.2v6h-1.2zM88.8,40v6l3.2,-3z"/></g>
<g><path d="M94.6,45.6v-.8a1.5,1.5 0 0 1 3,0v.8" stroke="#b9b9b9" stroke-width="1" fill="none"/><rect x="93.4" y="45.8" width="5.2" height="4.6" fill="#e6cc52" stroke="#b89a20" stroke-width=".6"/></g>
<g fill="url(#gsq)"><rect x="1263" y="35" width="6" height="6"/><rect x="1273" y="35" width="6" height="6"/><rect x="1263" y="45" width="6" height="6"/><rect x="1273" y="45" width="6" height="6"/></g>
<g fill="#cfe6f6" fill-opacity=".85"><rect x="1267" y="36" width="1" height="1"/><rect x="1264" y="39" width="1" height="1"/><rect x="1274" y="36" width="1" height="1"/><rect x="1277" y="39" width="1" height="1"/><rect x="1264" y="46" width="1" height="1"/><rect x="1267" y="49" width="1" height="1"/><rect x="1277" y="46" width="1" height="1"/><rect x="1274" y="49" width="1" height="1"/></g>
<path d="M1339,42h5.4l-2.7,3.2z" fill="#0f1a30"/>
<path d="M1421.8,42h5.4l-2.7,3.2z" fill="#0f1a30"/>
<g fill="none"><path d="M1355.6,37c.2,6 1.4,11.4 6,11.6h5.6" stroke="#8f9a9a" stroke-width="1.1"/><path d="M1355.2,48.6l4.2,-5.2 5.2,1 3.6,-7.6" stroke="#3f97ec" stroke-width="1.2"/><circle cx="1359.4" cy="43.4" r="1.3" fill="#dff" stroke="#3aa2f0" stroke-width="1"/><circle cx="1364.6" cy="44.4" r="1.3" fill="#dff" stroke="#3aa2f0" stroke-width="1"/></g>
<!-- toolbar 2 icons -->
<g><text x="11.8" y="473.8" font-size="6" font-weight="bold" fill="#000" letter-spacing=".2">TOP</text><path d="M14.2,477.2l3.6,4.4 8.6,-8" stroke="#1f74e4" stroke-width="1.8" fill="none"/><path d="M28.8,475.2h5.2l-2.6,3z" fill="#0f1a30"/><rect x="40" y="466" width="1" height="20" fill="#8797b3"/></g>
<g><path d="M47.5,469.5h5.5l1,1.8h8.5v10.5h-15z" fill="#d7d9dc" stroke="#a3a5a8" stroke-width="1"/><path d="M50,473.5h3M50,476h3M50,478.5h3" stroke="#b5b7ba" stroke-width="1"/><rect x="54.5" y="473" width="6" height="5.5" fill="#c5c7ca" stroke="#adafb2" stroke-width=".6"/><path d="M48.5,482.5l3.5,-3" stroke="#b8b8b8" stroke-width="1.6"/></g>
<g><rect x="69.6" y="468.4" width="13" height="13.4" fill="#fff" stroke="#5b5140" stroke-width="1.1"/><path d="M71.2,470.2c1,2.6 2.4,5 4.6,5.6" stroke="#dc3232" stroke-width="1.1" fill="none"/><path d="M71.2,474.8c2.6,0 3.6,-3 5.6,-3.4h4" stroke="#2a9a2a" stroke-width="1.1" fill="none"/><path d="M71.2,479.4c2,0 2.6,-1.6 4,-2" stroke="#2a7ad6" stroke-width="1.1" fill="none"/><path d="M75.6,476.2h4v-2.8l5.4,4.8-5.4,4.8v-2.8h-4z" fill="url(#garr)" stroke="#1a49b4" stroke-width=".7"/></g>
</svg>
</body>
</html>
